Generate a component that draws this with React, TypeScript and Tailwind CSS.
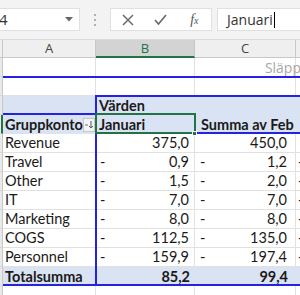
import React from "react";

const BLUE = "bg-[#2424e0]";

type Row = { a: string; b: string; c: string; bd?: boolean; cd?: boolean; dd?: boolean };

const data: Row[] = [
  { a: "Revenue", b: "375,0", c: "450,0" },
  { a: "Travel", b: "0,9", c: "1,2", bd: true, cd: true, dd: true },
  { a: "Other", b: "1,5", c: "2,0", bd: true, cd: true, dd: true },
  { a: "IT", b: "7,0", c: "7,0", bd: true, cd: true, dd: true },
  { a: "Marketing", b: "8,0", c: "8,0", bd: true, cd: true, dd: true },
  { a: "COGS", b: "112,5", c: "135,0", bd: true, cd: true, dd: true },
  { a: "Personnel", b: "159,9", c: "197,4", bd: true, cd: true, dd: true },
];

function RowHead({ active }: { active?: boolean }) {
  return (
    <div
      className={
        "h-full bg-[#e9e9e9] border-b border-[#d6d6d6] " +
        (active ? "border-r-2 border-r-[#217346]" : "border-r border-r-[#c8c8c8]")
      }
    />
  );
}

export default function App() {
  const cellFont = "font-['Lato',_'Liberation_Sans',_sans-serif] text-[14.5px] text-[#1a1a1a]";
  return (
    <div className="relative w-[300px] h-[295px] overflow-hidden bg-white">
      {/* toolbar */}
      <div className="h-[39px] bg-[#f3f3f3] flex items-center relative">
        <div className="h-[23px] w-[80px] bg-white border border-[#e0e0e0] border-l-0 flex items-center justify-between pr-[6px]">
          <span className="font-['Open_Sans',_sans-serif] text-[15px] text-[#333] leading-none -ml-[1px]">4</span>
          <svg width="8" height="5" viewBox="0 0 8 5"><path d="M0 0h8L4 4.5z" fill="#666" /></svg>
        </div>
        <div className="w-[30px] flex flex-col items-center gap-[3px]">
          <div className="w-[2px] h-[2px] bg-[#b0b0b0]" />
          <div className="w-[2px] h-[2px] bg-[#b0b0b0]" />
          <div className="w-[2px] h-[2px] bg-[#b0b0b0]" />
        </div>
        <div className="h-[23px] w-[102px] bg-white border border-[#e0e0e0] flex items-center">
          <div className="w-[34px] flex justify-center">
            <svg width="12" height="12" viewBox="0 0 12 12"><path d="M1 1L11 11M11 1L1 11" stroke="#6b6b6b" strokeWidth="1.5" /></svg>
          </div>
          <div className="w-[34px] flex justify-center">
            <svg width="13" height="11" viewBox="0 0 13 11"><path d="M1 6l3.5 4L12 1" stroke="#6b6b6b" strokeWidth="1.7" fill="none" /></svg>
          </div>
          <div className="w-[34px] flex justify-center">
            <span className="font-['Liberation_Serif',_serif] italic text-[14px] text-[#555] leading-none">f<span className="text-[10px]">x</span></span>
          </div>
        </div>
        <div className="ml-[5px] h-[23px] flex-1 bg-white border border-[#e0e0e0] border-r-0 flex items-center pl-[9px]">
          <span className="font-['Open_Sans',_sans-serif] text-[14px] text-[#333] leading-none">Januari</span>
          <div className="w-[1px] h-[16px] bg-black ml-[1px]" />
        </div>
      </div>

      {/* column headers */}
      <div className="grid grid-cols-[3px_93px_99px_101px_4px] h-[19px] bg-[#efefef] border-t border-[#dadada] font-['Open_Sans',_sans-serif] text-[13px] text-[#444]">
        <div className="border-r border-b border-[#c8c8c8]" />
        <div className="border-r border-b border-[#c8c8c8] flex items-center justify-center leading-none">A</div>
        <div className="bg-[#d3d3d3] border-r border-[#c8c8c8] border-b-2 border-b-[#217346] flex items-center justify-center leading-none text-[#217346]">B</div>
        <div className="border-r border-b border-[#c8c8c8] flex items-center justify-center leading-none">C</div>
        <div className="border-b border-[#c8c8c8]" />
      </div>

      {/* body */}
      <div className={"grid grid-cols-[3px_93px_99px_101px_4px] grid-rows-[19px_19px_19px_19px_19px_19px_19px_19px_19px_19px_19px_19px_19px] " + cellFont}>
        {/* row 1 */}
        <RowHead />
        <div className="border-r border-b border-[#e1e1e1]" />
        <div className="border-r border-b border-[#e1e1e1]" />
        <div className="border-r border-b border-[#e1e1e1] flex items-center justify-end overflow-visible whitespace-nowrap">
          <span className="text-[#a8a8a8] -mr-[6px] font-['Open_Sans',_sans-serif] text-[14px]">Släpp</span>
        </div>
        <div className="border-b border-[#e1e1e1]" />

        {/* row 2 blank */}
        <RowHead />
        <div className="border-r border-b border-[#e1e1e1]" />
        <div className="border-r border-b border-[#e1e1e1]" />
        <div className="border-r border-b border-[#e1e1e1]" />
        <div className="border-b border-[#e1e1e1]" />

        {/* Värden row */}
        <RowHead />
        <div className="bg-[#dae3f3]" />
        <div className="bg-[#dae3f3] flex items-center pl-[3px] font-bold">Värden</div>
        <div className="bg-[#dae3f3]" />
        <div className="bg-[#dae3f3]" />

        {/* header row */}
        <RowHead active />
        <div className="bg-[#dae3f3] flex items-center pl-[2px] pr-[2px] justify-between font-bold">
          <span>Gruppkonto</span>
          <div className="w-[14px] h-[14px] bg-[#f4f4f4] border border-[#c6c6c6] flex items-center justify-center">
            <svg width="10" height="9" viewBox="0 0 10 9">
              <path d="M1 5h3" stroke="#777" strokeWidth="1" />
              <path d="M7 1v7M5 6l2 2 2-2" stroke="#555" strokeWidth="1" fill="none" />
            </svg>
          </div>
        </div>
        <div className="bg-[#dae3f3] flex items-center pl-[3px] font-bold">Januari</div>
        <div className="bg-[#dae3f3] flex items-center pl-[6px] font-bold whitespace-nowrap">Summa av Feb</div>
        <div className="bg-[#dae3f3]" />

        {data.map((r) => (
          <React.Fragment key={r.a}>
            <RowHead />
            <div className="border-r border-b border-[#e1e1e1] flex items-center pl-[2px]">{r.a}</div>
            <div className="border-r border-b border-[#e1e1e1] flex items-center justify-between pl-[4px] pr-[5px]">
              <span>{r.bd ? "-" : ""}</span>
              <span>{r.b}</span>
            </div>
            <div className="border-r border-b border-[#e1e1e1] flex items-center justify-between pl-[5px] pr-[8px]">
              <span>{r.cd ? "-" : ""}</span>
              <span>{r.c}</span>
            </div>
            <div className="border-b border-[#e1e1e1] flex items-center pl-[2px] overflow-hidden">{r.dd ? "-" : ""}</div>
          </React.Fragment>
        ))}

        {/* total */}
        <RowHead />
        <div className="bg-[#dae3f3] flex items-center pl-[2px] font-bold">Totalsumma</div>
        <div className="bg-[#dae3f3] flex items-center justify-end pr-[5px] font-bold">85,2</div>
        <div className="bg-[#dae3f3] flex items-center justify-end pr-[8px] font-bold">99,4</div>
        <div className="bg-[#dae3f3]" />

        {/* bottom row */}
        <RowHead />
        <div className="border-r border-b border-[#e1e1e1]" />
        <div className="border-r border-b border-[#e1e1e1]" />
        <div className="border-r border-b border-[#e1e1e1]" />
        <div className="border-b border-[#e1e1e1]" />
      </div>

      {/* overlays: drop-zone outlines */}
      <div className={"absolute left-[3px] right-0 top-[76px] h-[2px] " + BLUE} />
      <div className={"absolute left-[96px] right-0 top-[95px] h-[2px] " + BLUE} />
      <div className={"absolute left-[95px] w-[2px] top-[95px] h-[191px] " + BLUE} />
      <div className={"absolute left-[3px] w-[93px] top-[113px] h-[2px] " + BLUE} />
      <div className={"absolute left-[195px] right-0 top-[132px] h-[2px] " + BLUE} />
      <div className={"absolute left-[3px] right-0 top-[284px] h-[2px] " + BLUE} />
      {/* active cell */}
      <div className="absolute left-[95px] top-[113px] w-[101px] h-[21px] border-2 border-[#217346]" />
      <div className="absolute left-[192px] top-[131px] w-[5px] h-[5px] bg-[#217346] border border-white" />
    </div>
  );
}
